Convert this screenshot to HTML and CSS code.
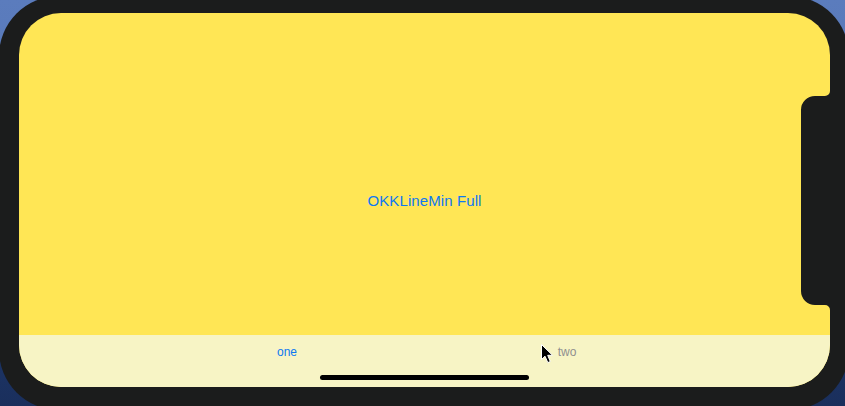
FILE: index.html
```html
<!DOCTYPE html>
<html>
<head>
<meta charset="utf-8">
<link rel="stylesheet" href="styles.css">
</head>
<body>
  <div class="desktop">
    <div class="device">
      <div class="screen">
        <div class="content">
          <span class="title">OKKLineMin Full</span>
        </div>
        <div class="tabbar">
          <div class="tabs">
            <div class="tab tab-active">one</div>
            <div class="tab">two</div>
          </div>
          <div class="home-area">
            <div class="home-indicator"></div>
          </div>
        </div>
        <svg class="notch" width="34" height="219" viewBox="0 0 34 219">
          <path d="M34 0 A5 5 0 0 1 29 5 L19 5 A14 14 0 0 0 5 19 L5 200 A14 14 0 0 0 19 214 L29 214 A5 5 0 0 1 34 219 Z" fill="#1b1c1c"/>
        </svg>
      </div>
    </div>
    <svg class="cursor" width="16" height="22" viewBox="0 0 16 22">
      <path d="M1.5 1.5 L1.5 16.5 L5 13.2 L7.8 19.6 L10.3 18.5 L7.7 12.3 L12.5 12.3 Z" fill="#000" stroke="#ffffff" stroke-width="1" stroke-linejoin="round"/>
    </svg>
  </div>
</body>
</html>
```

FILE: styles.css
```css
html, body {
  margin: 0;
  padding: 0;
  width: 845px;
  height: 406px;
  overflow: hidden;
}

body {
  background: linear-gradient(180deg, #5b7cbd 0%, #5879b9 18%, #2d4a82 60%, #1c3466 85%, #1a2f5c 100%);
  font-family: "Liberation Sans", Arial, sans-serif;
}

.desktop {
  position: relative;
  width: 845px;
  height: 406px;
}

.device {
  width: 850px;
  height: 414px;
  margin: -4px 0 0 -1px;
  box-sizing: border-box;
  padding: 17px 0 0 20px;
  border-radius: 60px;
  background: #1b1c1c;
}

.screen {
  position: relative;
  width: 811px;
  height: 374px;
  border-radius: 42px;
  overflow: hidden;
  background: #ffe655;
  display: flex;
  flex-direction: column;
}

.content {
  flex: 1;
  display: flex;
  align-items: center;
  justify-content: center;
  padding-top: 52px;
}

.title {
  font-size: 15px;
  color: #0d78f2;
  letter-spacing: 0.1px;
}

.tabbar {
  height: 52px;
  background: #f7f4c5;
  display: flex;
  flex-direction: column;
}

.tabs {
  height: 32px;
  display: flex;
  justify-content: center;
  padding-left: 5px;
}

.tab {
  width: 280px;
  display: flex;
  align-items: center;
  justify-content: center;
  font-size: 12px;
  color: #8f8f8f;
  padding-top: 1px;
}

.tab-active {
  color: #0d78f2;
}

.home-area {
  flex: 1;
  display: flex;
  justify-content: center;
  padding-top: 8px;
}

.home-indicator {
  width: 209px;
  height: 5px;
  border-radius: 3px;
  background: #000;
}

.notch {
  position: absolute;
  right: 0;
  top: 78px;
  display: block;
}

.cursor {
  position: absolute;
  left: 540px;
  top: 347px;
  display: block;
}
```
